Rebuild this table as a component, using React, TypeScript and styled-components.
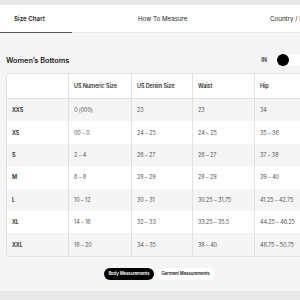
import React from 'react'
import styled, { createGlobalStyle } from 'styled-components'

const GlobalStyle = createGlobalStyle`
  html, body {
    margin: 0;
    padding: 0;
    width: 300px;
    height: 300px;
    overflow: hidden;
    background: #e9e9ea;
  }
  body {
    font-family: Inter, "Liberation Sans", Arial, sans-serif;
    color: #222;
  }
`

const Page = styled.div`
  width: 300px;
  height: 300px;
  display: flex;
  flex-direction: column;
  padding-top: 5px;
  box-sizing: border-box;
`

const Panel = styled.div`
  background: #f5f5f6;
  height: 286px;
  display: flex;
  flex-direction: column;
  overflow: hidden;
`

const Tabs = styled.nav`
  display: grid;
  grid-template-columns: 124px 132px 1fr;
  height: 27px;
  background: #fff;
  border-bottom: 1px solid #ececec;
  flex-shrink: 0;
`

const Tab = styled.div<{ $active?: boolean }>`
  position: relative;
  display: flex;
  align-items: center;
  padding-left: 14px;
  font-size: 6.2px;
  font-weight: ${(p) => (p.$active ? 600 : 400)};
  color: #222;
  white-space: nowrap;

  &::after {
    content: '';
    display: ${(p) => (p.$active ? 'block' : 'none')};
    position: absolute;
    left: 0;
    bottom: -1px;
    width: 72px;
    height: 1px;
    background: #555;
  }
`

const Content = styled.section`
  padding: 20px 0 0 6px;
  display: flex;
  flex-direction: column;
`

const TitleRow = styled.div`
  display: flex;
  align-items: center;
  justify-content: space-between;
  height: 14px;
  margin-bottom: 6px;
`

const Title = styled.h2`
  margin: 0;
  font-size: 7.3px;
  font-weight: 600;
  color: #1a1a1a;
`

const UnitToggle = styled.div`
  display: flex;
  align-items: center;
  gap: 10px;
  margin-right: -11px;
  font-size: 5.5px;
  font-weight: 600;
  color: #333;
`

const Track = styled.div`
  width: 34px;
  height: 12px;
  border-radius: 6px;
  background: #fff;
  display: flex;
  align-items: center;
`

const Knob = styled.div`
  width: 12px;
  height: 12px;
  border-radius: 50%;
  background: #000;
`

const Table = styled.table`
  border-collapse: separate;
  border-spacing: 0;
  width: 360px;
  table-layout: fixed;
  border: 1px solid #e2e2e4;
  border-radius: 4px;
  overflow: hidden;
  font-size: 5.5px;
  letter-spacing: -0.1px;
`

const Th = styled.th`
  background: #fff;
  height: 24px;
  padding: 0 5px;
  text-align: left;
  font-weight: 600;
  color: #333;
  border-bottom: 1px solid #e2e2e4;
  border-left: 1px solid #e2e2e4;
  white-space: nowrap;
  &:first-child {
    border-left: none;
  }
`

const Tr = styled.tr<{ $striped?: boolean }>`
  background: ${(p) => (p.$striped ? '#f5f5f6' : '#fff')};
`

const Td = styled.td<{ $label?: boolean }>`
  height: 22.4px;
  padding: 0 5px;
  color: ${(p) => (p.$label ? '#222' : '#555')};
  font-weight: ${(p) => (p.$label ? 600 : 400)};
  border-left: 1px solid #e2e2e4;
  white-space: nowrap;
  &:first-child {
    border-left: none;
  }
`

const Switcher = styled.div`
  display: flex;
  justify-content: center;
  gap: 4px;
  margin-top: 11px;
  padding-left: 12px;
`

const Pill = styled.button<{ $active?: boolean }>`
  border: none;
  font-family: inherit;
  height: 12px;
  padding: 0 4px;
  border-radius: 6px;
  font-size: 4.3px;
  letter-spacing: -0.1px;
  font-weight: 600;
  background: ${(p) => (p.$active ? '#000' : '#fff')};
  color: ${(p) => (p.$active ? '#fff' : '#222')};
`

const columns = ['', 'US Numeric Size', 'US Denim Size', 'Waist', 'Hip', 'Inseam']

const rows = [
  ['XXS', '0 (000)', '23', '23', '34', '30'],
  ['XS', '00 – 0', '24 – 25', '24 – 25', '35 – 36', '30'],
  ['S', '2 – 4', '26 – 27', '26 – 27', '37 – 38', '30'],
  ['M', '6 – 8', '28 – 29', '28 – 29', '39 – 40', '30'],
  ['L', '10 – 12', '30 – 31', '30.25 – 31.75', '41.25 – 42.75', '30'],
  ['XL', '14 – 16', '32 – 33', '33.25 – 35.5', '44.25 – 46.25', '30'],
  ['XXL', '18 – 20', '34 – 35', '38 – 40', '48.75 – 50.75', '30'],
]

const widths = [61, 63, 61, 62, 62, 51]

export default function App() {
  return (
    <Page>
      <GlobalStyle />
      <Panel>
        <Tabs>
          <Tab $active>Size Chart</Tab>
          <Tab>How To Measure</Tab>
          <Tab>Country / Region</Tab>
        </Tabs>
        <Content>
          <TitleRow>
            <Title>Women’s Bottoms</Title>
            <UnitToggle>
              IN
              <Track>
                <Knob />
              </Track>
            </UnitToggle>
          </TitleRow>
          <Table>
            <colgroup>
              {widths.map((w, i) => (
                <col key={i} style={{ width: w }} />
              ))}
            </colgroup>
            <thead>
              <tr>
                {columns.map((c, i) => (
                  <Th key={i}>{c}</Th>
                ))}
              </tr>
            </thead>
            <tbody>
              {rows.map((r, i) => (
                <Tr key={r[0]} $striped={i % 2 === 0}>
                  {r.map((cell, j) => (
                    <Td key={j} $label={j === 0}>
                      {cell}
                    </Td>
                  ))}
                </Tr>
              ))}
            </tbody>
          </Table>
          <Switcher>
            <Pill $active>Body Measurements</Pill>
            <Pill>Garment Measurements</Pill>
          </Switcher>
        </Content>
      </Panel>
    </Page>
  )
}
